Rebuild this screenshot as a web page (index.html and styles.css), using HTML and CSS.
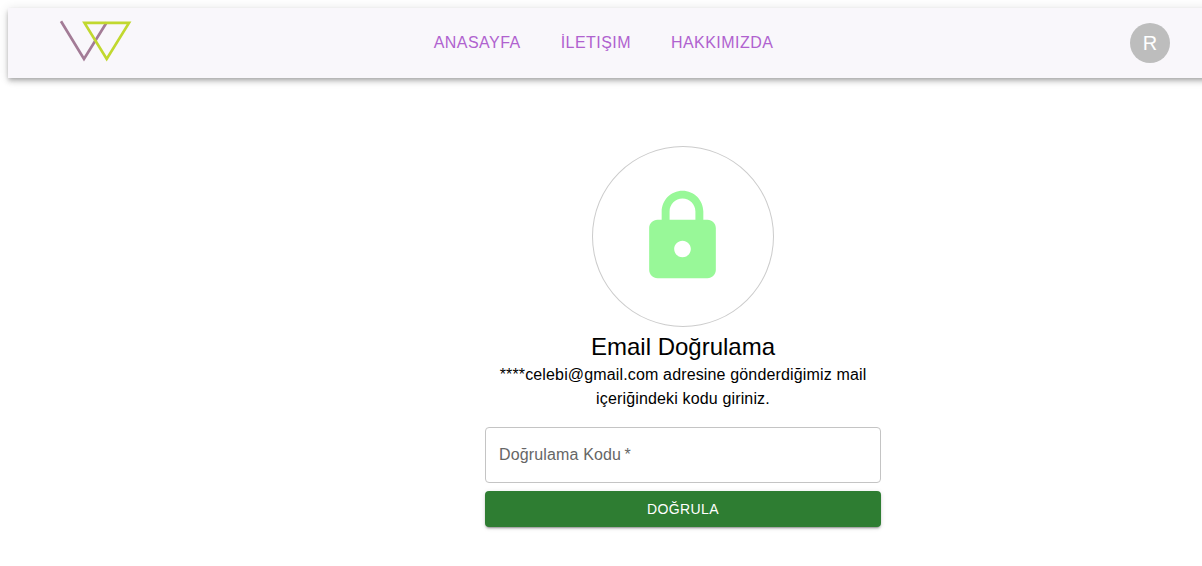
FILE: index.html
```html
<!DOCTYPE html>
<html lang="tr">
<head>
<meta charset="utf-8">
<title>Email Doğrulama</title>
<link rel="stylesheet" href="styles.css">
</head>
<body>
<header class="appbar">
  <svg class="logo" width="80" height="46" viewBox="0 0 80 46" fill="none" stroke-width="2.7">
    <path d="M6 3.200 29 41 51.600 4.500" stroke="#a37b96"/>
    <path d="M29.500 4.900H74L51.700 41Z" stroke="#c1d82f"/>
  </svg>
  <nav class="nav">
    <a class="nav-link">ANASAYFA</a>
    <a class="nav-link">İLETIŞIM</a>
    <a class="nav-link">HAKKIMIZDA</a>
  </nav>
  <div class="avatar">R</div>
</header>
<main class="verify">
  <div class="lock-ring">
    <svg class="lock" viewBox="0.12 0.12 24 24"><path d="M18 8h-1V6c0-2.760-2.240-5-5-5S7 3.240 7 6v2H6c-1.100 0-2 .9-2 2v10c0 1.100.9 2 2 2h12c1.100 0 2-.9 2-2V10c0-1.100-.9-2-2-2zm-6 9c-1.100 0-2-.9-2-2s.9-2 2-2 2 .9 2 2-.9 2-2 2zm3.100-9H8.900V6c0-1.710 1.390-3.100 3.100-3.100 1.710 0 3.100 1.390 3.100 3.100v2z"/></svg>
  </div>
  <h1 class="title">Email Doğrulama</h1>
  <p class="message">****celebi@gmail.com adresine gönderdiğimiz mail içeriğindeki kodu giriniz.</p>
  <div class="field">Doğrulama Kodu&#8201;*</div>
  <button class="submit">DOĞRULA</button>
</main>
</body>
</html>
```

FILE: styles.css
```css
* { box-sizing: border-box; }
body {
  min-height: 100vh;
  margin: 0;
  padding: 8px 0 0 8px;
  overflow: hidden;
  background: #fff;
  color: #000;
  font-family: "Liberation Sans", Arial, sans-serif;
  font-size: 16px;
}
.appbar {
  display: grid;
  grid-template-columns: 1fr auto 1fr;
  align-items: center;
  width: 1210px;
  height: 70px;
  padding: 0 48px 0 47px;
  background: #f9f7fb;
  box-shadow: 0 2px 4px -1px rgba(0,0,0,.2), 0 4px 5px 0 rgba(0,0,0,.14), 0 1px 10px 0 rgba(0,0,0,.12);
}
.logo { margin-bottom: 4px; }
.nav { display: flex; gap: 40px; margin-right: 18px; }
.nav-link {
  color: #b062cf;
  line-height: 28px;
  letter-spacing: .457px;
}
.avatar {
  justify-self: end;
  width: 40px;
  height: 40px;
  border-radius: 50%;
  background: #bdbdbd;
  color: #fff;
  font-size: 20px;
  line-height: 40px;
  text-align: center;
}
.verify {
  display: flex;
  flex-direction: column;
  align-items: center;
  width: 396px;
  margin: 68px 0 0 477px;
}
.lock-ring {
  display: flex;
  align-items: center;
  justify-content: center;
  width: 182px;
  height: 181px;
  border: 1px solid #ccc;
  border-radius: 50%;
}
.lock { width: 100px; height: 100px; fill: #98f898; }
.title {
  margin: 4px 0 0;
  font-size: 24px;
  font-weight: 400;
  line-height: 32px;
}
.message {
  margin: 0;
  line-height: 24px;
  letter-spacing: .15px;
  text-align: center;
}
.field {
  width: 100%;
  height: 56px;
  margin-top: 16px;
  padding: 0 13px;
  border: 1px solid #c4c4c4;
  border-radius: 4px;
  color: #666;
  line-height: 54px;
  letter-spacing: .15px;
}
.submit {
  width: 100%;
  height: 36px;
  margin-top: 8px;
  padding: 0;
  border: 0;
  border-radius: 4px;
  background: #2e7d32;
  color: #fff;
  font: 14px/24px "Liberation Sans", Arial, sans-serif;
  letter-spacing: .4px;
  box-shadow: 0 3px 1px -2px rgba(0,0,0,.2), 0 2px 2px 0 rgba(0,0,0,.14), 0 1px 5px 0 rgba(0,0,0,.12);
}
```
